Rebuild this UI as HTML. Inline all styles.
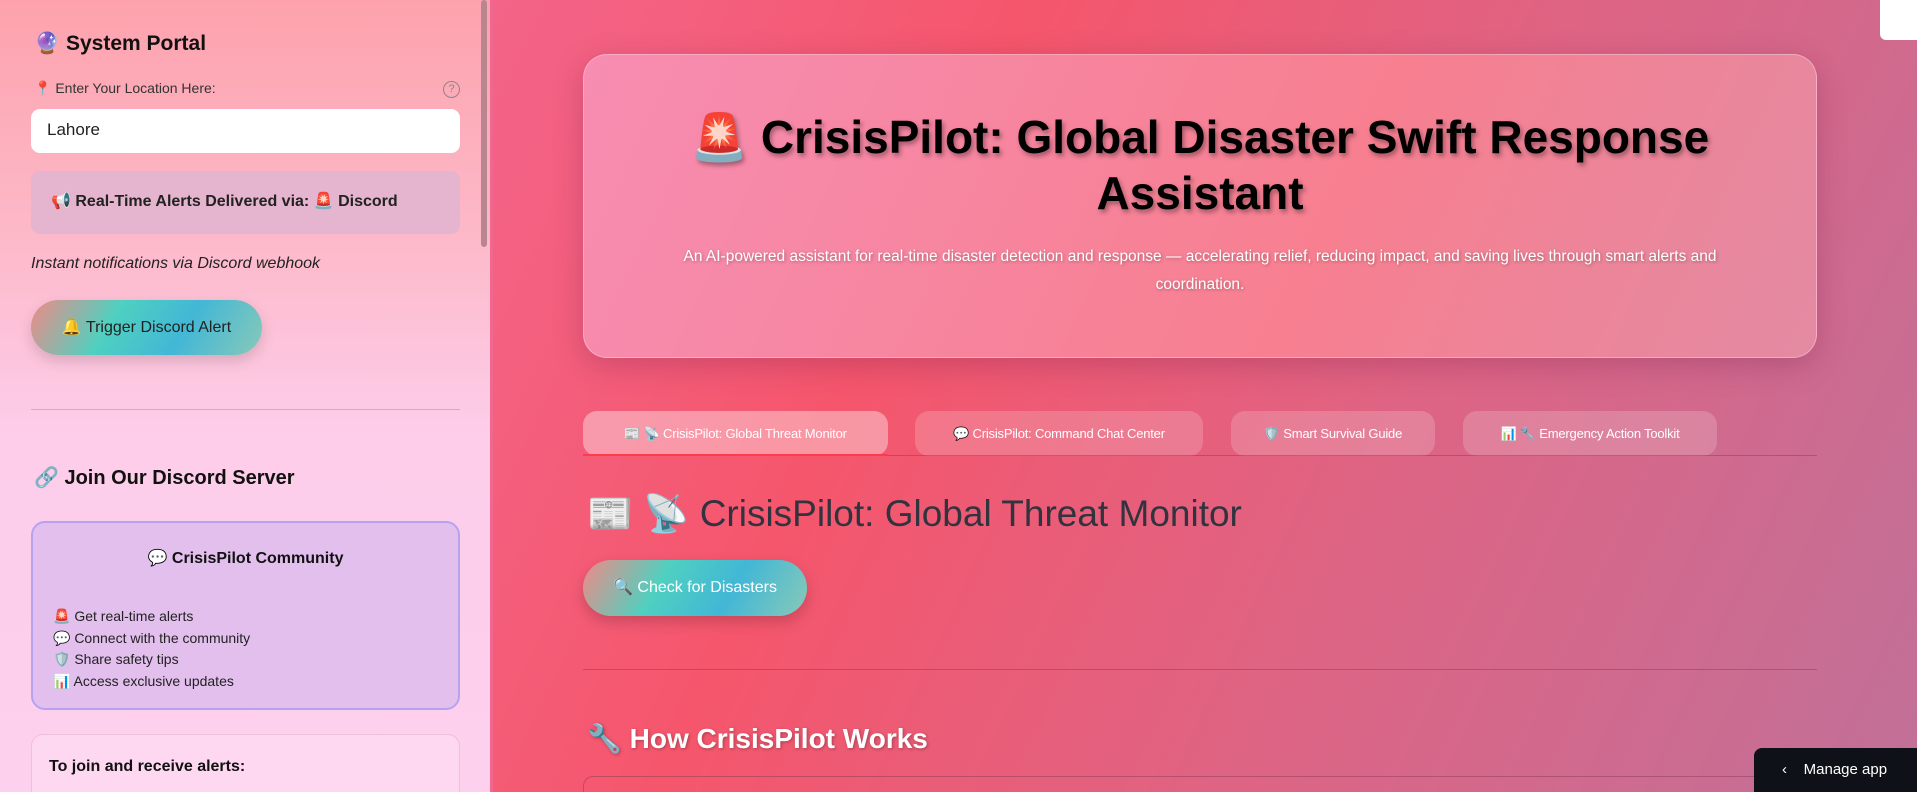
<!DOCTYPE html>
<html style="width:1917px;height:792px;overflow:hidden"><head><meta charset="utf-8"><style>
*{box-sizing:border-box;margin:0;padding:0}
body{width:1917px;height:792px;overflow:hidden;font-family:"Liberation Sans","Noto Sans CJK JP",sans-serif;position:relative;
background:linear-gradient(115deg,#ef6d9f 0%,#f4607f 30%,#f5566c 45%,#de6484 70%,#c17098 100%);}
.side{position:absolute;left:0;top:0;width:493px;height:792px;overflow:hidden;background:linear-gradient(180deg,#fda2ad 0%,#fdb9c9 30%,#fdcdea 55%,#fdd0ee 100%);border-right:3px solid #f2678f}
.sb{position:absolute;left:481px;top:0;width:6px;height:247px;background:#b98690;border-radius:3px}
.h{position:absolute;font-weight:bold;color:#111}
.abs{position:absolute}
.tab{position:absolute;top:411px;height:45px;border-radius:14px;background:rgba(255,255,255,.18);color:#fff;font-size:13px;display:flex;align-items:center;justify-content:center;white-space:nowrap;letter-spacing:-0.2px}
</style></head><body>
<div class="side">
 <div class="h" style="left:34px;top:32px;font-size:21px">🔮 System Portal</div>
 <div class="abs" style="left:34px;top:80px;font-size:14px;color:#333">📍 Enter Your Location Here:</div>
 <div class="abs" style="left:443px;top:81px;width:17px;height:17px;border:1.5px solid #888;border-radius:50%;font-size:11px;color:#888;text-align:center;line-height:14px">?</div>
 <div class="abs" style="left:31px;top:109px;width:429px;height:44px;background:#fff;border-radius:9px;padding:11px 16px;font-size:17px;color:#222">Lahore</div>
 <div class="abs" style="left:31px;top:171px;width:429px;height:63px;background:#e5b4cf;border-radius:9px;padding:20px 20px;font-size:16px;font-weight:bold;color:#222">📢 Real-Time Alerts Delivered via: 🚨 Discord</div>
 <div class="abs" style="left:31px;top:255px;font-size:16px;font-style:italic;color:#222">Instant notifications via Discord webhook</div>
 <div class="abs" style="left:31px;top:300px;width:231px;height:55px;border-radius:28px;background:linear-gradient(120deg,#ef8a86 0%,#4fd0c0 35%,#42b7d6 65%,#88c9b8 100%);box-shadow:0 6px 14px rgba(0,0,0,.15);font-size:16px;color:#222;text-align:center;line-height:55px">🔔 Trigger Discord Alert</div>
 <div class="abs" style="left:31px;top:409px;width:429px;height:1px;background:#d9a9c3"></div>
 <div class="h" style="left:34px;top:465px;font-size:20px">🔗 Join Our Discord Server</div>
 <div class="abs" style="left:31px;top:521px;width:429px;height:189px;background:#e3bfee;border:2px solid #b6a3ef;border-radius:14px">
  <div style="text-align:center;margin-top:25px;font-weight:bold;font-size:16px;color:#111">💬 CrisisPilot Community</div>
  <div style="margin:38px 0 0 20px;font-size:14px;line-height:21.5px;color:#222">🚨 Get real-time alerts<br>💬 Connect with the community<br>🛡️ Share safety tips<br>📊 Access exclusive updates</div>
 </div>
 <div class="abs" style="left:31px;top:734px;width:429px;height:70px;background:#fdd8f0;border:1px solid #f0c0d8;border-radius:12px;padding:23px 17px;font-weight:bold;font-size:16px;color:#111">To join and receive alerts:</div>
</div>
<div class="sb"></div>
<div class="abs" style="left:583px;top:54px;width:1234px;height:304px;border-radius:24px;background:linear-gradient(115deg,#f78db2 0%,#f77f90 60%,#e38aa2 100%);border:1px solid rgba(255,255,255,.3);box-shadow:0 8px 30px rgba(120,30,80,.3);text-align:center">
 <div style="margin-top:54px;font-size:46px;font-weight:bold;line-height:56px;color:#000;text-shadow:2px 3px 5px rgba(0,0,0,.35);padding:0 90px">🚨 CrisisPilot: Global Disaster Swift Response Assistant</div>
 <div style="margin-top:22px;font-size:15.5px;line-height:28px;color:#fff;text-shadow:1px 1px 3px rgba(0,0,0,.3);padding:0 60px">An AI-powered assistant for real-time disaster detection and response — accelerating relief, reducing impact, and saving lives through smart alerts and coordination.</div>
</div>
<div class="tab" style="left:583px;width:305px;background:rgba(255,255,255,.38)">📰 📡 CrisisPilot: Global Threat Monitor</div>
<div class="tab" style="left:915px;width:288px">💬 CrisisPilot: Command Chat Center</div>
<div class="tab" style="left:1231px;width:204px">🛡️ Smart Survival Guide</div>
<div class="tab" style="left:1463px;width:254px">📊 🔧 Emergency Action Toolkit</div>
<div class="abs" style="left:583px;top:455px;width:1234px;height:1px;background:rgba(140,60,90,.5)"></div>
<div class="abs" style="left:583px;top:454px;width:305px;height:2px;background:#ff3b4a"></div>
<div class="abs" style="left:587px;top:493px;font-size:37px;color:#31333f;font-weight:500">📰 📡 CrisisPilot: Global Threat Monitor</div>
<div class="abs" style="left:583px;top:560px;width:224px;height:56px;border-radius:28px;background:linear-gradient(120deg,#ef8a86 0%,#4fd0c0 35%,#42b7d6 65%,#88c9b8 100%);box-shadow:0 6px 14px rgba(0,0,0,.18);font-size:16px;color:#fff;text-align:center;line-height:56px">🔍 Check for Disasters</div>
<div class="abs" style="left:583px;top:669px;width:1234px;height:1px;background:rgba(140,60,90,.5)"></div>
<div class="abs" style="left:587px;top:722px;font-size:28px;color:#fff;font-weight:bold;text-shadow:1px 1px 3px rgba(0,0,0,.3)">🔧 How CrisisPilot Works</div>
<div class="abs" style="left:583px;top:776px;width:1234px;height:16px;border:1px solid rgba(140,60,90,.5);border-bottom:none;border-radius:10px 10px 0 0"></div>
<div class="abs" style="left:1754px;top:748px;width:163px;height:44px;background:#0e1117;border-radius:8px 0 0 0;color:#fff;font-size:15px;line-height:44px;padding-left:28px">‹&nbsp;&nbsp;&nbsp;&nbsp;Manage app</div>
<div class="abs" style="left:1880px;top:0;width:37px;height:40px;background:#fff;border-radius:0 0 0 6px"></div>
</body></html>
